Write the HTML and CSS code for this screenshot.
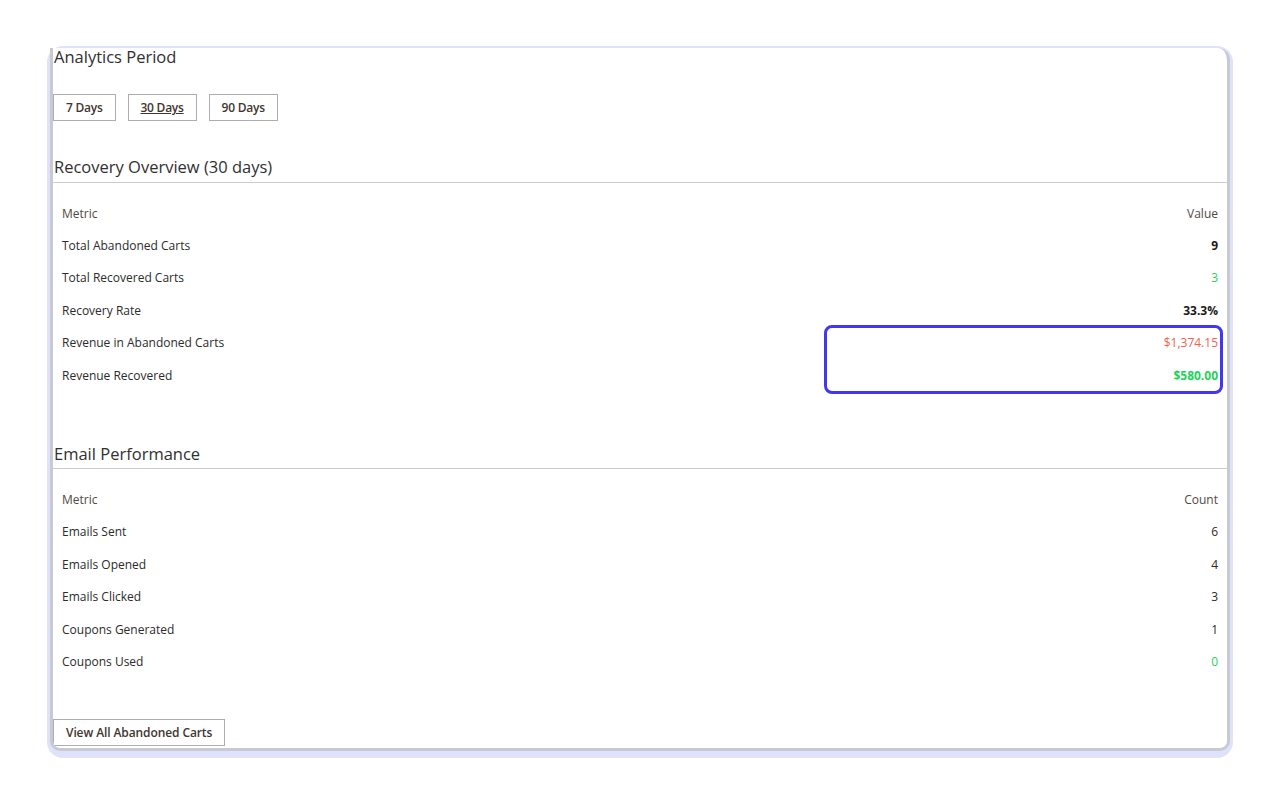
FILE: index.html
```html
<!DOCTYPE html>
<html lang="en">

<head>
    <meta charset="UTF-8" />
    <title>Cart Recovery Analytics</title>
    <link rel="stylesheet" href="styles.css">
</head>

<body>
    <div class="frame">
        <div class="window">
            <div class="content">
                <!-- period switch -->
                <h2 class="section-title">Analytics Period</h2>
                <div class="period-list">
                    <a href="javascript:;" class="btn">7 Days</a>
                    <a href="javascript:;" class="btn active">30 Days</a>
                    <a href="javascript:;" class="btn">90 Days</a>
                </div>

                <!-- recovery stats -->
                <h2 class="section-title ruled">Recovery Overview (30 days)</h2>
                <div class="table-wrap">
                    <table class="stats">
                        <thead>
                            <tr>
                                <th>Metric</th>
                                <th class="num">Value</th>
                            </tr>
                        </thead>
                        <tbody>
                            <tr>
                                <td>Total Abandoned Carts</td>
                                <td class="num"><strong>9</strong></td>
                            </tr>
                            <tr>
                                <td>Total Recovered Carts</td>
                                <td class="num green">3</td>
                            </tr>
                            <tr>
                                <td>Recovery Rate</td>
                                <td class="num"><strong>33.3%</strong></td>
                            </tr>
                            <tr>
                                <td>Revenue in Abandoned Carts</td>
                                <td class="num red">$1,374.15</td>
                            </tr>
                            <tr>
                                <td>Revenue Recovered</td>
                                <td class="num green"><strong>$580.00</strong></td>
                            </tr>
                        </tbody>
                    </table>
                    <div class="highlight"></div>
                </div>

                <!-- email stats -->
                <h2 class="section-title ruled email-title">Email Performance</h2>
                <table class="stats">
                    <thead>
                        <tr>
                            <th>Metric</th>
                            <th class="num">Count</th>
                        </tr>
                    </thead>
                    <tbody>
                        <tr>
                            <td>Emails Sent</td>
                            <td class="num">6</td>
                        </tr>
                        <tr>
                            <td>Emails Opened</td>
                            <td class="num">4</td>
                        </tr>
                        <tr>
                            <td>Emails Clicked</td>
                            <td class="num">3</td>
                        </tr>
                        <tr>
                            <td>Coupons Generated</td>
                            <td class="num">1</td>
                        </tr>
                        <tr>
                            <td>Coupons Used</td>
                            <td class="num green">0</td>
                        </tr>
                    </tbody>
                </table>

                <div class="actions">
                    <a href="javascript:;" class="btn">View All Abandoned Carts</a>
                </div>
            </div>
        </div>
    </div>
</body>

</html>
```

FILE: styles.css
```css
* {
    margin: 0;
    padding: 0;
    box-sizing: border-box;
}

body {
    background: #fff;
    font-family: "Open Sans", "Liberation Sans", sans-serif;
    color: #303030;
}

/* outer rounded frame */
.frame {
    width: 1186px;
    height: 712px;
    margin: 46px 0 0 47px;
    padding: 2px 3px 7px 3px;
    background: #dfe2fb;
    border-radius: 16px;
}

.window {
    height: 100%;
    background: #fff;
    border: 3px solid #c9c9d2;
    border-top: none;
    border-radius: 0 12px 10px 10px;
    overflow: hidden;
}

.section-title {
    font-size: 16.5px;
    font-weight: 400;
    line-height: 18px;
    color: #303030;
    padding-left: 1px;
}

.section-title.ruled {
    margin-top: 37px;
    padding-bottom: 6px;
    border-bottom: 1px solid #cccccc;
}

.section-title.email-title {
    margin-top: 54px;
    padding-bottom: 5px;
}

.period-list {
    display: flex;
    gap: 12px;
    margin-top: 28px;
}

.btn {
    display: inline-block;
    height: 27px;
    padding: 0 12px;
    border: 1px solid #adadad;
    background: #fff;
    color: #41362f;
    font-size: 12px;
    font-weight: 600;
    line-height: 25px;
    letter-spacing: -0.25px;
    text-decoration: none;
}

.btn.active {
    text-decoration: underline;
}

.table-wrap {
    position: relative;
}

.stats {
    width: 100%;
    border-collapse: collapse;
    margin-top: 14px;
    font-size: 12px;
}

.stats th,
.stats td {
    height: 32.4px;
    padding: 0 9px;
    text-align: left;
    vertical-align: middle;
}

.stats th {
    font-weight: 400;
    color: #514943;
}

.stats td {
    color: #2b2b2b;
}

.stats .num {
    text-align: right;
}

.stats strong {
    font-weight: 700;
    color: #1a1a1a;
}

.stats .green,
.stats .green strong {
    color: #1fd35a;
}

.stats .red {
    color: #f0614e;
}

/* marker drawn round the revenue values */
.highlight {
    position: absolute;
    left: 771px;
    top: 128px;
    width: 399px;
    height: 69px;
    border: 3px solid #4336f3;
    border-radius: 8px;
}

.actions {
    margin-top: 41px;
}

.actions .btn {
    letter-spacing: -0.1px;
}
```
